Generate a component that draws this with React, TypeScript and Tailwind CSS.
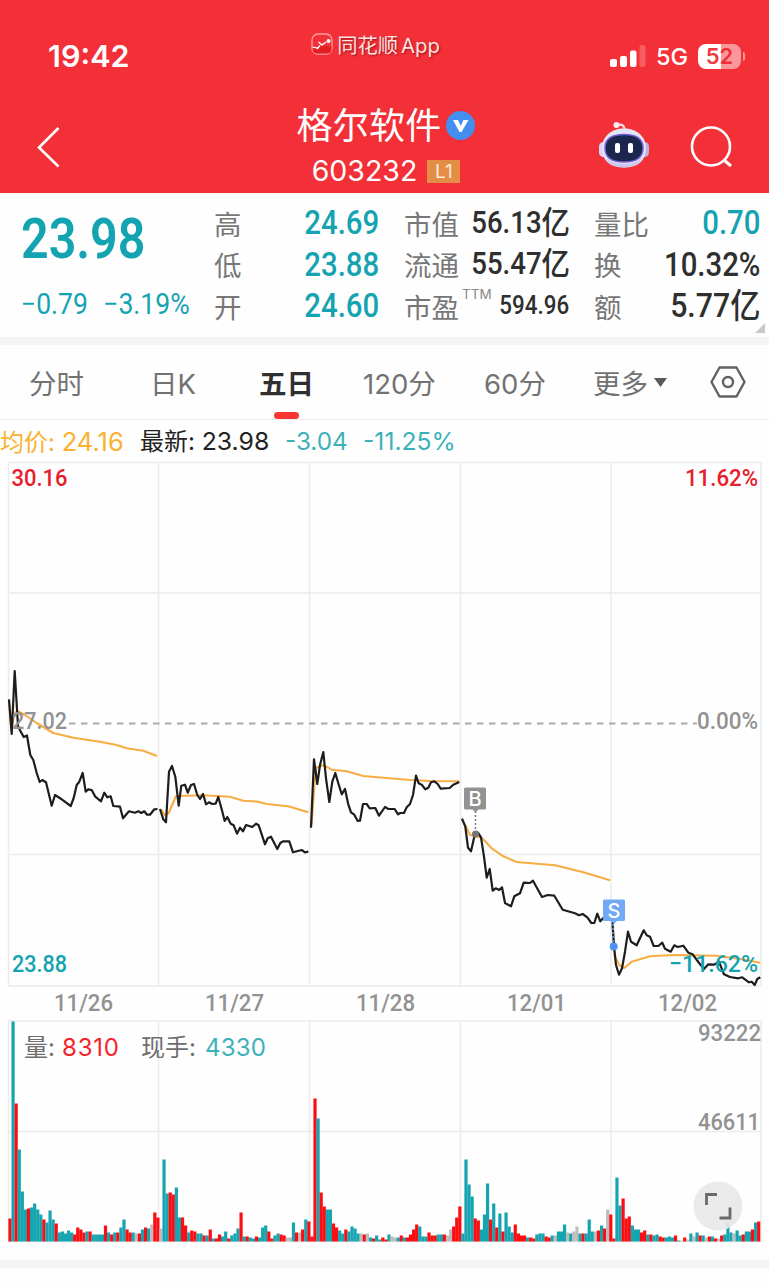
const GRID_X = [8.5, 158.5, 309.5, 460.5, 611, 761];

const PRICE_LINES = [
  "9,699.3 11.7,734 14.7,671 18,726 20.7,731.5 23.7,737 27,735.5 30.3,755 33.3,760 36.7,773 39.7,782 42.3,780 46,782.3 51.7,805.7 55,795 61.7,799.3 70.7,806 73.7,798 76.7,785 79.3,781.7 82.7,773 85.7,791.7 88.3,789.3 91.7,790 95.3,796.7 101,801.3 104.3,792.7 107.3,797.3 110.7,796.3 113.3,806 120,806.7 123,818.3 129,811.3 135,812.7 138.3,811.3 141.3,813 144.3,811.3 147,814.7 150,814.7 154.3,809.3 157.5,809",
  "160,809 163.3,819.3 166,822.3 169,771.7 172,766 175.3,776.7 178.7,805.7 181.3,785.7 185,784.7 187.7,792.7 191,785 194,784 197.3,795 200,799 203,794 206,804.3 209,802.3 212.3,804 215.7,803.7 218.3,797 221.7,809.3 224.7,821 227.3,817 230.7,823.7 233.7,825.3 237,833.7 240,827.7 243,831.3 246,825 252.3,827 256,823.7 258.7,825.3 265,844.3 267.7,838.3 271,836.7 277.3,849 280.3,843 283.3,841.3 289.3,841.3 293,852.3 301.7,850 305,852.3 308.3,851.7",
  "311,827.7 314,759.3 317.3,784 320,765 323.3,752 326,778.3 329.3,802 332.3,781.7 335.3,773 338.3,783.3 341.7,794.3 345,789 348,803.3 351,812.3 354.3,814.7 357.7,821 360,820.7 363,804 366.7,804 369.7,808.3 375.3,808 379,815.7 385,807 388.3,809 394.7,809 398,814.3 400.3,813 404,813 406.7,807.3 410,804 413,795 416,775.7 418.7,783.3 422,785 425.3,789.3 428.3,787.7 431,782.3 434.3,781.3 437.7,784 440.7,788.7 449.7,788 453.3,784.7 459.3,782",
  "462,818.7 465.3,826.7 468,847.7 471,851.3 474.7,835 478,832.7 481,837.3 484,856.7 486.7,877.7 489.7,869 492.7,890.7 495.7,888.3 499.3,890 502,887.3 505,903 511,906.3 514.3,896.3 520,893.3 523.7,882.7 530,883 533,880.7 542,897 547.7,895 554.3,895.7 562.7,909.7 575,913.3 579,915.3 582.7,914 587.3,917.3 591.3,923 594.3,923 597.3,913.7 600.3,921.3 604,917.3 610,910.7",
  "612.7,912 612.7,926.7 614,946.7 616,965 619,974.7 622,968.3 625,951.7 628,931.7 631,941.7 636.7,945.3 643.7,930.3 646.7,935.3 650,936.7 653.7,946 658.3,946 662.3,942.7 665,948.7 670.7,951.7 674.3,945.3 677.7,947 683.3,945.7 688.3,952.7 692.7,954.3 698.3,962 704,969 708.3,964.3 714,964.7 719,961.7 724,974.3 730,977 738.3,978.3 742.3,977.3 749,982.3 751.7,981.7 754.7,985 757.3,979 760.3,977.3",
];

const AVG_LINES = [
  "9,702 11.5,731 14,714 17,711 20.7,712.7 25,715 36.7,723 53.3,733 73.3,737.7 100,741.7 116.7,745 126.7,748.3 143.3,750.7 157,756",
  "160.7,809 165,815.3 168.7,813 176,796 203,795.3 230,796.7 243.3,800.7 258.3,801.7 266.7,804 288.3,806.3 308.3,812.3",
  "311.5,825 314,790 316,768 323.3,765 331.7,769.7 346.7,771.3 363.3,776 410,780 430,781 459.3,781.3",
  "462,819 466,826.7 470,835 481.7,837.7 491.7,848.3 503.3,856.3 516.7,862 540,864 555,865.3 583.3,872.3 610,880.3",
  "613,927 615,956.7 619.3,965 624.3,968 631.7,961.7 650,956.3 673.3,955 716.7,955.7 740,959 760.3,962.7",
];

// one entry per bar: colour key (r up, t down, g flat) + height
const VOLUME = (
  "r23 t220 r138 t92 t50 t32 r33 t34 t38 t32 t27 r22 t19 t31 t22 r18 t9 t10 t8 t11 t9 r7 r14 r12 r9 t10 r10 t7 t7 t7 t7 r16 t9 r7 t9 r9 t14 t22 r12 r9 t9 g8 r8 t12 r14 t13 g17 r29 r24 " +
  "g13 t82 t48 r49 r47 t54 t24 r24 r16 t9 r11 r10 t8 t8 r6 t6 r12 t3 r3 r7 t5 t10 r3 t6 t8 t13 r29 t5 r5 t4 t3 r5 t4 t14 t16 r10 r3 t6 t8 r7 r6 g4 g4 t19 r9 g9 r12 t22 r20 " +
  "r5 r143 t123 r49 r35 t32 t32 r18 r14 t11 t8 r12 t10 t15 t13 t8 g8 r7 g8 t4 r3 t6 t2 r4 r2 t7 g5 g4 t4 r6 t4 r4 r7 r12 r17 t15 t5 t5 r9 r6 r6 t7 t7 r7 g6 g12 r15 r24 r35 " +
  "t8 t82 t57 t45 r23 r21 t12 t27 t58 r22 t38 r14 t28 r10 t29 t15 t9 r17 r8 r6 r6 t4 r4 r3 t7 t8 t8 r5 r4 t6 g6 t10 t10 t17 g9 t8 g10 g15 t8 r8 t8 t22 t10 g10 r11 t16 r13 g32 r27 " +
  "r3 t64 t36 r43 r23 r25 t16 t12 t12 r9 r11 t7 r7 t6 t7 r5 r4 t4 t5 t4 r6 t1 g1 r4 g2 t8 g5 t9 r6 t6 g4 r5 t5 r3 g3 r6 t7 t19 t9 g8 t11 t6 r7 t10 t10 r12 t19 r20"
).split(" ");

const BAR_COLORS: Record<string, string> = {
  r: "#fb0d12",
  t: "#16a5b0",
  g: "#bdbdbd",
};

export default function App() {
  return (
    <div className="w-full min-h-[1285px] bg-[#fefefe] overflow-hidden font-['Inter','Noto_Sans_CJK_SC',sans-serif]">
      <Header />
      <Quote />
      <div className="h-2 bg-[#f4f4f4]" />
      <Tabs />
      <Legend />
      <Chart />
      <div className="h-2 bg-[#f4f4f4]" />
    </div>
  );
}

function Header() {
  return (
    <header className="h-[193px] bg-[#f33038] text-white">
      <div className="h-[92px] grid grid-cols-[1fr_auto_1fr] px-6">
        <div className="pl-6 pt-9 text-[30.5px] leading-10 font-semibold">
          19:42
        </div>
        <div className="pt-[34px] pr-[18px] flex items-start gap-1 text-[#ffe3e3] [text-shadow:1px_1px_2px_rgba(90,0,0,.6)]">
          <svg width="22" height="22" viewBox="0 0 22 22" fill="none" className="-mt-px">
            <rect x="1" y="1" width="20" height="20" rx="6" stroke="#ff9da0" strokeWidth="1.3" />
            <path d="M1.500 14q3.500-1 5 .8Q9 12 11 11q3 3.500 9.500 2.500V16q0 4.500-5 4.500h-9q-5 0-5-5z" fill="#e21d24" />
            <path d="M1.500 14.500q3-.5 5 1l2.500-3M7.500 9l3.500 3 4-3" stroke="#fff" strokeWidth="1.400" />
            <circle cx="17.500" cy="8" r="2" fill="#fff" />
          </svg>
          <span className="text-[20.3px] leading-6 whitespace-nowrap">
            同花顺<span className="pl-[3px]">App</span>
          </span>
        </div>
        <div className="flex items-start justify-end pt-11">
          <svg width="36" height="24" viewBox="0 0 36 24" fill="#fff">
            <rect x="0" y="15" width="7" height="8" rx="2" />
            <rect x="10" y="12" width="7" height="11" rx="2" />
            <rect x="20" y="6.500" width="6.500" height="16.500" rx="2" />
            <rect x="29.500" y="1" width="6" height="22" rx="2" opacity=".22" />
          </svg>
          <span className="ml-[10px] text-[23.5px] leading-[26px] font-medium">5G</span>
          <div className="ml-[10px] w-[43px] h-[25px] rounded-lg bg-[linear-gradient(90deg,#fff_53%,#fb979b_53%)] text-center text-[22px] leading-[25px] font-semibold">
            <span className="text-[#ee3a43]">5</span>
            <span className="text-[#ec2f39]">2</span>
          </div>
          <div className="ml-0.5 mt-2 w-[2px] h-[9px] rounded-r-full bg-[#fb979b]" />
        </div>
      </div>
      <div className="h-[101px] grid grid-cols-[1fr_auto_1fr] pl-9 pr-9">
        <svg width="26" height="42" viewBox="0 0 26 42" fill="none" className="mt-[34px]">
          <path d="M22.500 2 3 21.500 22.500 40.500" stroke="#fff" strokeWidth="2.600" />
        </svg>
        <div className="flex flex-col items-center pl-[3px]">
          <div className="mt-[11px] flex items-center gap-[5px]">
            <span className="pt-px text-[36px] leading-[45px] tracking-[0.2px]">格尔软件</span>
            <svg width="29" height="29" viewBox="0 0 29 29" className="-mt-0.5">
              <circle cx="14.500" cy="14.500" r="14.500" fill="#438ff0" />
              <path d="M7 9h5l2.800 6L17.500 9H22.500L15.500 21h-2z" fill="#fff" />
            </svg>
          </div>
          <div className="flex items-center gap-[10px]">
            <span className="text-[28.5px] leading-[44px]">603232</span>
            <span className="w-[33px] h-[23px] bg-[#e38d47] text-center text-[19px] leading-[23px] text-[#ffe9d4]">L1</span>
          </div>
        </div>
        <div className="flex items-start justify-end gap-[41px] pt-[30px]">
          <Robot />
          <svg width="43" height="43" viewBox="0 0 43 43" fill="none" stroke="#fff" strokeWidth="2.600" className="mt-[4px]">
            <circle cx="21" cy="20.500" r="19" />
            <path d="m34 34 7 6" strokeWidth="3" />
          </svg>
        </div>
      </div>
    </header>
  );
}

function Robot() {
  return (
    <svg width="50" height="48" viewBox="0 0 50 48" fill="none" className="-mt-px">
      <path d="M18 4q7-2 8 5" stroke="#f7dce8" strokeWidth="2.200" />
      <circle cx="17.500" cy="4" r="3" fill="#fbe9ef" />
      <rect x="0" y="21" width="9" height="15" rx="4.500" fill="#d8d5f3" />
      <rect x="41" y="21" width="9" height="15" rx="4.500" fill="#b9b5e6" />
      <path d="M25 7.500c13 0 22 8 22 20S39 46.500 25 46.500 3 39.500 3 27.500s9-20 22-20z" fill="#e4e4f7" />
      <path d="M6 36q5 10.500 19 10.500T44 36q-6 7-19 7T6 36z" fill="#cbc8ec" />
      <path d="M25 13.500c12.500 0 19 4 19 13.500s-6.500 14-19 14S6 36.500 6 27s6.500-13.500 19-13.500z" fill="#1b274d" stroke="#6f5dd0" strokeWidth="1.500" />
      <rect x="16" y="22" width="5" height="10" rx="2" fill="#fff" />
      <rect x="29" y="22" width="5" height="10" rx="2" fill="#fff" />
    </svg>
  );
}

function Quote() {
  return (
    <section className="h-36 flex gap-[25px] pr-2 font-['Roboto','Noto_Sans_CJK_SC',sans-serif]">
      <div className="w-[189px] pl-[21px] text-[#14a3b0] whitespace-nowrap">
        <div className="mt-[17px] text-[56px] leading-[58px] font-semibold origin-left scale-x-[.865]">
          23.98
        </div>
        <div className="mt-[22px] flex gap-[17px] text-[29.5px] leading-7 origin-left scale-x-[.9]">
          <span>−0.79</span>
          <span>−3.19%</span>
        </div>
      </div>
      <div className="w-[165px] pt-[9px]">
        <Row label="高" value="24.69" teal />
        <Row label="低" value="23.88" teal />
        <Row label="开" value="24.60" teal />
      </div>
      <div className="w-[165px] pt-[9px]">
        <Row label="市值" value="56.13" unit="亿" />
        <Row label="流通" value="55.47" unit="亿" />
        <Row label="市盈" sup="TTM" value="594.96" small />
      </div>
      <div className="relative w-[166px] pt-[9px]">
        <Row label="量比" value="0.70" teal />
        <Row label="换" value="10.32%" />
        <Row label="额" value="5.77" unit="亿" large />
        <svg width="10" height="10" className="absolute -right-[5px] bottom-[4px]">
          <path d="M10 0v10H0z" fill="#c9c9c9" />
        </svg>
      </div>
    </section>
  );
}

function Row({
  label,
  value,
  unit,
  sup,
  teal,
  small,
  large,
}: {
  label: string;
  value: string;
  unit?: string;
  sup?: string;
  teal?: boolean;
  small?: boolean;
  large?: boolean;
}) {
  return (
    <div className="h-[41.5px] flex items-center justify-between whitespace-nowrap">
      <div className="flex text-[27.5px] leading-10 text-[#777] font-['Noto_Sans_CJK_SC',sans-serif]">
        {label}
        {sup && <sup className="w-0 pl-[3px] top-0 text-[13.5px] leading-4 text-[#8a8a8a] font-['Inter',sans-serif]">{sup}</sup>}
      </div>
      <div
        className={`flex items-center justify-end font-medium origin-right ${
          teal ? "text-[#14a3b0]" : "text-[#2f2f2f]"
        } ${small ? "text-[26px] scale-x-[.86]" : large ? "text-[34px] scale-x-[.89]" : teal || !unit ? "text-[33px] scale-x-[.89]" : "text-[31px] scale-x-[.89]"}`}
      >
        {value}
        {unit && (
          <span className={large ? "text-[34px] leading-10" : "text-[32px] leading-10"}>{unit}</span>
        )}
      </div>
    </div>
  );
}

function Tabs() {
  const tab = "text-[27.5px] leading-[75px] text-[#727272]";
  return (
    <nav className="h-[75px] flex items-start border-b border-[#ececec] pt-0.5 pl-[29px] pr-[22px] whitespace-nowrap font-['Inter','Noto_Sans_CJK_SC',sans-serif]">
      <span className={`${tab} w-[121px]`}>分时</span>
      <span className={`${tab} w-[109px]`}>日K</span>
      <span className="relative w-[104px] text-[27.5px] leading-[75px] font-bold text-[#2f2f2f]">
        五日
        <i className="absolute left-[15px] bottom-[3px] w-[25px] h-[7px] rounded-full bg-[#fa3432]" />
      </span>
      <span className={`${tab} w-[121px]`}>120分</span>
      <span className={`${tab} w-[109px]`}>60分</span>
      <span className={`${tab} flex items-center`}>
        更多
        <svg width="13" height="9" viewBox="0 0 13 9" className="-mt-1 ml-[6px]">
          <path d="M0 0h13L6.500 9z" fill="#5a5a5a" />
        </svg>
      </span>
      <svg width="36" height="32" viewBox="0 0 36 32" fill="none" stroke="#626262" strokeWidth="2.400" className="ml-auto mr-px mt-[19px]">
        <path d="M9.500 1.500h17L34.500 16l-8 14.500h-17L1.500 16z" strokeLinejoin="round" />
        <circle cx="18" cy="16" r="5" />
      </svg>
    </nav>
  );
}

function Legend() {
  return (
    <div className="h-[41px] flex pt-px text-[24px] leading-[41px] whitespace-nowrap">
      <span className="w-[140px] text-[#f9b22f]">均价: <span className="text-[25.5px]">24.16</span></span>
      <span className="w-[145px] text-[#222]">最新: <span className="text-[24.8px]">23.98</span></span>
      <span className="w-[78px] text-[24.3px] text-[#3cb1ba]">-3.04</span>
      <span className="text-[24.7px] text-[#3cb1ba]">-11.25%</span>
    </div>
  );
}

function Chart() {
  return (
    <svg
      width="769"
      height="799"
      viewBox="0 461 769 799"
      fill="none"
      className="block font-['Roboto','Noto_Sans_CJK_SC',sans-serif]"
    >
      <g stroke="#ececec" strokeWidth="1.500">
        <path d="M8 462.500h753.500M8 593h753.500M8 854.500h753.500M8 986h753.500M8 1021h753.500M8 1131.500h753.500M8 1241.500h753.500" />
        {GRID_X.map((x) => (
          <path key={x} d={`M${x} 462v524M${x} 1021v220`} />
        ))}
      </g>
      <path d="M69 723.500h628" stroke="#aaa" strokeWidth="1.900" strokeDasharray="6.500 5.500" />

      {AVG_LINES.map((points) => (
        <polyline key={points} points={points} stroke="#f7ad43" strokeWidth="2.100" strokeLinejoin="round" />
      ))}
      {PRICE_LINES.map((points) => (
        <polyline key={points} points={points} stroke="#1d1d1d" strokeWidth="2.200" strokeLinejoin="round" />
      ))}

      <Label x={11.5} y={486} w={56} color="#e6202b">30.16</Label>
      <Label x={685} y={486} w={73} color="#e6202b">11.62%</Label>
      <Label x={12} y={729} w={55} color="#929292">27.02</Label>
      <Label x={697} y={729} w={61} color="#929292">0.00%</Label>
      <Label x={12} y={972} w={55} color="#14a3b0">23.88</Label>
      <Label x={669} y={972} w={89} color="#14a3b0">−11.62%</Label>

      <path d="M475.500 811v22" stroke="#777" strokeWidth="1.500" strokeDasharray="2 2" />
      <circle cx="475.500" cy="834" r="3.500" fill="#777" />
      <path d="M465.500 787.500h19q1.500 0 1.500 1.500v19q0 1.500-1.500 1.500h-6l-3 3-3-3h-7q-1.500 0-1.500-1.500v-19q0-1.500 1.500-1.500z" fill="#929292" />
      <text x="475" y="806" fontSize="20" fontWeight="500" fill="#fff" textAnchor="middle" className="font-['Inter']">B</text>

      <path d="M613 924v20" stroke="#5c9df5" strokeWidth="1.500" strokeDasharray="2 2" />
      <circle cx="613.700" cy="946.500" r="4" fill="#4c92f4" />
      <path d="M604.500 899.500h19q1.500 0 1.500 1.500v18.500q0 1.500-1.500 1.500h-6.500l-3 3-3-3h-6.500q-1.500 0-1.500-1.500V901q0-1.500 1.500-1.500z" fill="#71a9f6" />
      <text x="614" y="917.500" fontSize="20" fontWeight="500" fill="#fff" textAnchor="middle" className="font-['Inter']">S</text>

      <Label x={54} y={1011} w={59} color="#929292">11/26</Label>
      <Label x={205} y={1011} w={59} color="#929292">11/27</Label>
      <Label x={356} y={1011} w={59} color="#929292">11/28</Label>
      <Label x={507} y={1011} w={59} color="#929292">12/01</Label>
      <Label x={658} y={1011} w={59} color="#929292">12/02</Label>

      {VOLUME.map((bar, i) => {
        const h = Number(bar.slice(1));
        return (
          <rect
            key={i}
            x={8.4 + i * 3.081}
            y={1241.5 - h}
            width="3.200"
            height={h}
            fill={BAR_COLORS[bar[0]]}
          />
        );
      })}

      <g fontSize="24" className="font-['Inter','Noto_Sans_CJK_SC',sans-serif]">
        <text x="24" y="1055.500" fill="#6e6e6e">量:</text>
        <text x="62" y="1055.500" fill="#f5222b" textLength="57">8310</text>
        <text x="141" y="1055.500" fill="#6e6e6e">现手:</text>
        <text x="205" y="1055.500" fill="#3cb1ba" textLength="61">4330</text>
      </g>
      <Label x={698} y={1041} w={63} color="#929292">93222</Label>
      <Label x={698} y={1130} w={62} color="#929292">46611</Label>

      <circle cx="718" cy="1206" r="24.500" fill="#e8e8e8" fillOpacity=".9" />
      <path d="M706.500 1205v-10.500H717M719.500 1218h10.500v-10.500" stroke="#6b6b6b" strokeWidth="2.800" />
    </svg>
  );
}

function Label({
  x,
  y,
  w,
  color,
  children,
}: {
  x: number;
  y: number;
  w: number;
  color: string;
  children: string;
}) {
  return (
    <text x={x} y={y} fill={color} fontSize="24.5" fontWeight="500" textLength={w} lengthAdjust="spacingAndGlyphs">
      {children}
    </text>
  );
}
